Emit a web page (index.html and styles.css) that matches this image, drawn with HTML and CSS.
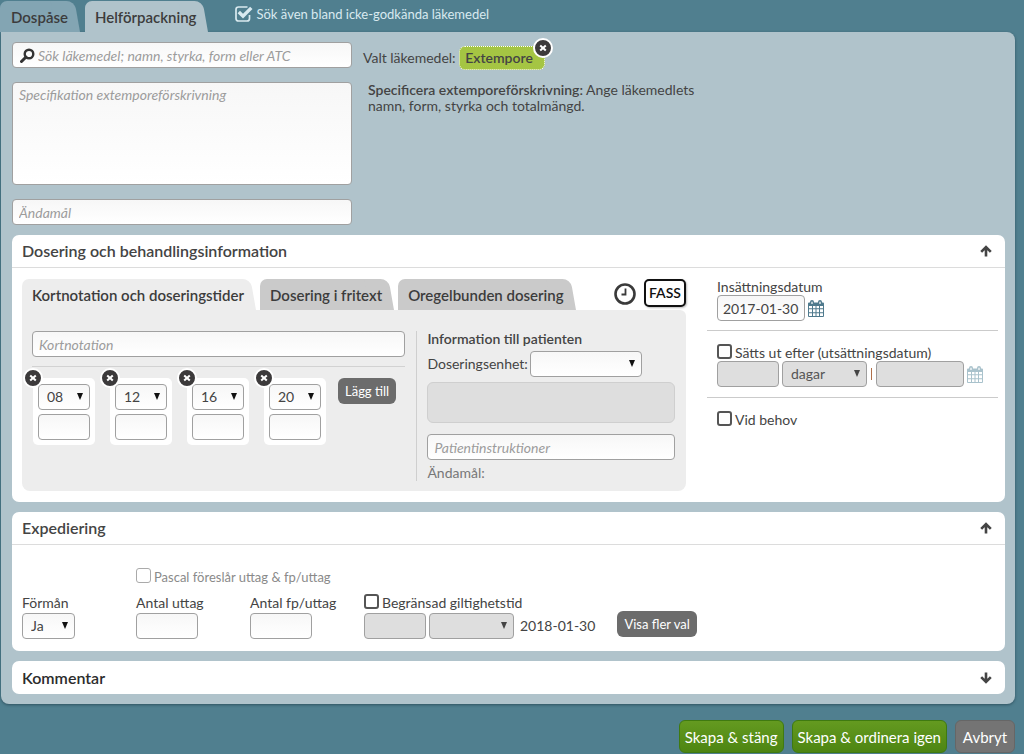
FILE: index.html
```html
<!DOCTYPE html>
<html lang="sv">
<head>
<meta charset="utf-8">
<meta name="viewport" content="width=device-width, initial-scale=1">
<title>Helförpackning</title>
<link rel="stylesheet" href="styles.css">
</head>
<body>
<svg class="defs" aria-hidden="true">
  <symbol id="calendar" viewBox="0 0 16 17">
    <path fill="currentColor" fill-rule="evenodd" d="M0 3.5Q0 2.5 1 2.5H2V2Q2 0 4 0T6 2V2.5H10V2Q10 0 12 0T14 2V2.5H15Q16 2.5 16 3.5V16Q16 17 15 17H1Q0 17 0 16ZM3.400 1.700V4H4.600V1.700ZM11.400 1.700V4H12.600V1.700ZM1 6V8.200H4V6ZM5 6V8.200H7.500V6ZM8.500 6V8.200H11V6ZM12 6V8.200H15V6ZM1 9.200V12.200H4V9.200ZM5 9.200V12.200H7.500V9.200ZM8.500 9.200V12.200H11V9.200ZM12 9.200V12.200H15V9.200ZM1 13.200V16H4V13.200ZM5 13.200V16H7.500V13.200ZM8.500 13.200V16H11V13.200ZM12 13.200V16H15V13.200Z"/>
  </symbol>
  <symbol id="arrow" viewBox="0 0 12 12">
    <path d="M6 11.500V2M1.200 6.800 6 2 10.800 6.800" fill="none" stroke="currentColor" stroke-width="2.600"/>
  </symbol>
  <symbol id="cross" viewBox="0 0 8 8">
    <path d="M1.200 1.400 6.800 6.600M6.800 1.400 1.200 6.600" fill="none" stroke="currentColor" stroke-width="2"/>
  </symbol>
</svg>

<header class="topbar">
  <nav class="tabs">
    <button type="button" class="tab tab-back"><span>Dospåse</span></button>
    <button type="button" class="tab tab-front"><span>Helförpackning</span></button>
  </nav>
  <label class="include">
    <input type="checkbox" class="include-box" checked>
    <svg class="include-icon" viewBox="0 0 18 16" aria-hidden="true"><path d="M14.500 9V12.500Q14.500 15 12 15H3.500Q1 15 1 12.500V3.500Q1 1 3.500 1H12.500" fill="none" stroke="currentColor" stroke-width="1.700"/><path d="M3.800 6 8 10.200 16.300 1.900" fill="none" stroke="currentColor" stroke-width="3.400"/></svg>
    Sök även bland icke-godkända läkemedel
  </label>
</header>

<main class="panel">
  <section class="drug">
    <div class="drug-fields">
      <div class="search">
        <svg class="search-icon" viewBox="0 0 15 15" aria-hidden="true"><circle cx="9" cy="6" r="4.300" fill="none" stroke="currentColor" stroke-width="2.400"/><path d="M6 9 1.500 13.500" stroke="currentColor" stroke-width="3" stroke-linecap="round"/></svg>
        <input type="text" class="field search-input" aria-label="Sök läkemedel" placeholder="Sök läkemedel; namn, styrka, form eller ATC">
      </div>
      <textarea class="field spec" aria-label="Specifikation" placeholder="Specifikation extemporeförskrivning"></textarea>
      <input type="text" class="field" aria-label="Ändamål" placeholder="Ändamål">
    </div>
    <div class="drug-info">
      <p class="chosen">Valt läkemedel: <span class="chip">Extempore<button type="button" class="close chip-close" aria-label="Ta bort Extempore"><svg><use href="#cross"/></svg></button></span></p>
      <p class="help"><b>Specificera extemporeförskrivning:</b> Ange läkemedlets namn, form, styrka och totalmängd.</p>
    </div>
  </section>

  <section class="card">
    <div class="card-head">
      <h2>Dosering och behandlingsinformation</h2>
      <button type="button" class="toggle" aria-label="Fäll ihop"><svg><use href="#arrow"/></svg></button>
    </div>
    <div class="dosing">
      <div class="dosing-main">
        <div class="dosing-top">
          <nav class="tabs tabs-inner">
            <button type="button" class="tab tab-active"><span>Kortnotation och doseringstider</span></button>
            <button type="button" class="tab tab-grey"><span>Dosering i fritext</span></button>
            <button type="button" class="tab tab-grey"><span>Oregelbunden dosering</span></button>
          </nav>
          <div class="tools">
            <button type="button" class="clock" aria-label="Historik"><svg viewBox="0 0 22 22"><circle cx="11" cy="11" r="9.500" fill="none" stroke="currentColor" stroke-width="2.600"/><path d="M11.500 5.500V11.500H7.500" fill="none" stroke="currentColor" stroke-width="1.800"/></svg></button>
            <button type="button" class="fass">FASS</button>
          </div>
        </div>
        <div class="dosing-body">
          <div class="schedule">
            <input type="text" class="field" aria-label="Kortnotation" placeholder="Kortnotation">
            <div class="times">
              <div class="time">
                <button type="button" class="close time-close" aria-label="Ta bort 08"><svg><use href="#cross"/></svg></button>
                <select class="field" aria-label="Tid 1"><option>08</option></select>
                <input type="text" class="field" aria-label="Dos 1">
              </div>
              <div class="time">
                <button type="button" class="close time-close" aria-label="Ta bort 12"><svg><use href="#cross"/></svg></button>
                <select class="field" aria-label="Tid 2"><option>12</option></select>
                <input type="text" class="field" aria-label="Dos 2">
              </div>
              <div class="time">
                <button type="button" class="close time-close" aria-label="Ta bort 16"><svg><use href="#cross"/></svg></button>
                <select class="field" aria-label="Tid 3"><option>16</option></select>
                <input type="text" class="field" aria-label="Dos 3">
              </div>
              <div class="time">
                <button type="button" class="close time-close" aria-label="Ta bort 20"><svg><use href="#cross"/></svg></button>
                <select class="field" aria-label="Tid 4"><option>20</option></select>
                <input type="text" class="field" aria-label="Dos 4">
              </div>
              <button type="button" class="btn add">Lägg till</button>
            </div>
          </div>
          <div class="patient">
            <h3>Information till patienten</h3>
            <div class="unit">
              <label for="unit">Doseringsenhet:</label>
              <select id="unit" class="field unit-select"><option></option></select>
            </div>
            <div class="preview"></div>
            <input type="text" class="field" aria-label="Patientinstruktioner" placeholder="Patientinstruktioner">
            <p class="purpose">Ändamål:</p>
          </div>
        </div>
      </div>
      <div class="dates">
        <div class="date-block">
          <label for="start">Insättningsdatum</label>
          <div class="date-row">
            <input type="text" id="start" class="field date" value="2017-01-30">
            <button type="button" class="calendar" aria-label="Välj datum"><svg><use href="#calendar"/></svg></button>
          </div>
        </div>
        <div class="date-block">
          <label class="check"><input type="checkbox">Sätts ut efter (utsättningsdatum)</label>
          <div class="date-row">
            <input type="text" class="field short" aria-label="Antal" disabled>
            <select class="field period" aria-label="Period" disabled><option>dagar</option></select>
            <span class="bar"></span>
            <input type="text" class="field date" aria-label="Utsättningsdatum" disabled>
            <button type="button" class="calendar" aria-label="Välj utsättningsdatum" disabled><svg><use href="#calendar"/></svg></button>
          </div>
        </div>
        <div class="date-block">
          <label class="check"><input type="checkbox">Vid behov</label>
        </div>
      </div>
    </div>
  </section>

  <section class="card">
    <div class="card-head">
      <h2>Expediering</h2>
      <button type="button" class="toggle" aria-label="Fäll ihop"><svg><use href="#arrow"/></svg></button>
    </div>
    <div class="dispense">
      <label class="check suggest"><input type="checkbox" disabled>Pascal föreslår uttag &amp; fp/uttag</label>
      <div class="cell">
        <label for="benefit">Förmån</label>
        <select id="benefit" class="field benefit"><option>Ja</option></select>
      </div>
      <div class="cell">
        <label for="count">Antal uttag</label>
        <input type="text" id="count" class="field short">
      </div>
      <div class="cell">
        <label for="packs">Antal fp/uttag</label>
        <input type="text" id="packs" class="field short">
      </div>
      <div class="cell">
        <label class="check"><input type="checkbox">Begränsad giltighetstid</label>
        <div class="date-row">
          <input type="text" class="field short" aria-label="Giltighetstid" disabled>
          <select class="field period" aria-label="Enhet" disabled><option></option></select>
          <span class="until">2018-01-30</span>
        </div>
      </div>
      <button type="button" class="btn more">Visa fler val</button>
    </div>
  </section>

  <section class="card">
    <div class="card-head card-head-closed">
      <h2>Kommentar</h2>
      <button type="button" class="toggle toggle-down" aria-label="Fäll ut"><svg><use href="#arrow"/></svg></button>
    </div>
  </section>
</main>

<footer class="actions">
  <button type="button" class="action action-green">Skapa &amp; stäng</button>
  <button type="button" class="action action-green">Skapa &amp; ordinera igen</button>
  <button type="button" class="action action-grey">Avbryt</button>
</footer>
</body>
</html>
```
FILE: styles.css
```css
* { box-sizing: border-box; }

body {
  margin: 0;
  background: #507f8f;
  color: #444;
  font: 14px/16px Lato, "Open Sans", sans-serif;
}

button, input, select, textarea {
  margin: 0;
  font: inherit;
  color: inherit;
}

button {
  padding: 0;
  border: 0;
  background: none;
}

h2, h3, p { margin: 0; }

svg { display: block; }

.defs { position: absolute; width: 0; height: 0; }

/* Tabs */

.topbar {
  display: flex;
  align-items: flex-start;
  gap: 27px;
  padding-top: 1px;
}

.tabs { display: flex; gap: 5px; }

.tab {
  position: relative;
  z-index: 0;
  height: 31px;
  padding: 0 12px 0 10px;
  font-size: 15px;
  font-weight: 600;
  white-space: nowrap;
  color: #3c3c3c;
}

.tab::before,
.tab::after {
  content: "";
  position: absolute;
  z-index: -1;
  top: 0;
  bottom: 0;
  background: var(--tab);
}

.tab::before { left: 0; right: 16px; border-radius: 7px 0 0 0; }

.tab::after {
  right: 0;
  width: 24px;
  border-radius: 0 8px 0 0;
  transform: skewX(10deg);
  transform-origin: bottom;
}

.tab-back { --tab: #83a5b3; padding-left: 11px; }
.tab-front { --tab: #b0c3cb; }
.tab-active { --tab: #ededed; }
.tab-grey { --tab: #cacaca; }

.include {
  display: flex;
  align-items: center;
  gap: 3px;
  padding-top: 5px;
  color: #d9eaf0;
  font-size: 13px;
}

.include-box { position: absolute; opacity: 0; }
.include-icon { width: 18px; height: 16px; }

/* Main panel */

.panel {
  display: flex;
  flex-direction: column;
  gap: 10px;
  margin: 0 9px 0 1px;
  padding: 10px 10px 10px 11px;
  background: #b0c3cb;
  border-radius: 0 8px 8px 8px;
  box-shadow: 0 1px 3px #2f5260;
}

.field {
  display: block;
  width: 100%;
  min-width: 0;
  height: 26px;
  padding: 0 6px;
  border: 1px solid #a0a0a0;
  border-radius: 4px;
  background: linear-gradient(#f7f7f7, #fff);
}

.field::placeholder { color: #9c9c9c; font-style: italic; opacity: 1; }

select.field {
  appearance: none;
  padding: 0 20px 0 8px;
  background:
    url("data:image/svg+xml,%3Csvg xmlns='http://www.w3.org/2000/svg' viewBox='0 0 6 7'%3E%3Cpath d='M0 0H6L3 7Z' fill='%23111'/%3E%3C/svg%3E") right 6px top 8px / 6px 7px no-repeat,
    linear-gradient(#f7f7f7, #fff);
}

.field:disabled {
  background-color: #dedede;
  background-image: none;
  color: #555;
  opacity: 1;
}

select.field:disabled {
  background-image: url("data:image/svg+xml,%3Csvg xmlns='http://www.w3.org/2000/svg' viewBox='0 0 6 7'%3E%3Cpath d='M0 0H6L3 7Z' fill='%23444'/%3E%3C/svg%3E");
}

.drug { display: flex; gap: 11px; }

.drug-fields {
  display: flex;
  flex-direction: column;
  gap: 14px;
  flex: 0 1 340px;
}

.search { position: relative; }

.search-icon {
  position: absolute;
  top: 6px;
  left: 8px;
  width: 15px;
  height: 15px;
  color: #333;
}

.search-input { padding-left: 25px; }

.spec {
  height: 103px;
  padding: 4px 6px;
  resize: none;
}

.drug-info {
  flex: 0 1 340px;
  padding-top: 4px;
}

.chip {
  position: relative;
  display: inline-block;
  padding: 3px 11px 3px 5px;
  border: 1px dotted #fff;
  border-radius: 6px;
  background: #a5c543;
  font-weight: 600;
}

.close {
  display: grid;
  place-items: center;
  width: 20px;
  height: 20px;
  border: 2px solid #fff;
  border-radius: 50%;
  background: #3c3a3b;
  color: #fff;
}

.close svg { width: 8px; height: 8px; }

.chip-close { position: absolute; top: -9px; right: -9px; }

.help { padding: 12px 0 0 5px; }
.help b { font-weight: 600; }

/* Cards */

.card {
  border-radius: 7px;
  background: #fff;
}

.card-head {
  display: flex;
  align-items: center;
  justify-content: space-between;
  min-height: 33px;
  padding: 0 13px 0 10px;
  border-bottom: 1px solid #dcdcdc;
}

.card-head-closed { border-bottom: 0; color: #2c2c2c; }

h2 { font-size: 16px; font-weight: 600; line-height: 20px; }
h3 { font-size: 14px; font-weight: 600; }

.toggle { color: #444; }
.toggle svg { width: 12px; height: 12px; }
.toggle-down { transform: rotate(180deg); }

.dosing {
  display: flex;
  gap: 21px;
  padding: 11px 7px 11px 10px;
}

.dosing-main { flex: 1 1 664px; }

.dosing-top { display: flex; justify-content: space-between; }

.tabs-inner { gap: 4px; }

.tools { display: flex; align-items: flex-start; gap: 8px; }

.clock { padding-top: 4px; color: #3a3a3a; }
.clock svg { width: 22px; height: 22px; }

.fass {
  width: 42px;
  height: 28px;
  border: 2px solid #111;
  border-radius: 5px;
  background: #fff;
  box-shadow: 1px 1px 2px #bbb;
  color: #111;
  font-weight: 600;
}

.dosing-body {
  display: flex;
  gap: 11px;
  padding: 21px 11px 10px 10px;
  border-radius: 0 6px 8px 8px;
  background: #ededed;
}

.schedule { flex: 1 1 374px; }

.times {
  display: flex;
  align-items: flex-start;
  margin-top: 9px;
  padding: 11px 0 0 1px;
  border-top: 1px solid #d2d2d2;
}

.time {
  position: relative;
  display: flex;
  flex-direction: column;
  gap: 4px;
  width: 62px;
  padding: 6px 5px 5px;
  border-radius: 5px;
  background: #fff;
}

.time + .time { margin-left: 15px; }

.time-close { position: absolute; top: -10px; left: -10px; }

.btn {
  height: 26px;
  padding: 0 7px;
  border-radius: 6px;
  background: #6c6c6c;
  color: #fff;
  font-size: 13px;
  white-space: nowrap;
}

.add { margin-left: 12px; }

.patient {
  flex: 0 1 259px;
  padding-left: 10px;
  border-left: 1px solid #cfcfcf;
}

.unit { display: flex; align-items: center; gap: 2px; padding-top: 4px; }
.unit-select { width: 112px; }

.preview {
  height: 41px;
  margin: 5px 0 11px;
  border: 1px solid #cfcfcf;
  border-radius: 6px;
  background: #dedede;
}

.purpose { padding-top: 5px; color: #777; }

/* Date column */

.dates { flex: 0 1 291px; }

.date-block { padding: 13px 0 10px 10px; }
.date-block:first-child { padding-top: 0; padding-bottom: 9px; }
.date-block + .date-block { border-top: 1px solid #cbcbcb; }

.date-row { display: flex; align-items: center; gap: 3px; }

.date { width: 88px; padding: 0 5px; }
.short { width: 62px; }
.period { width: 85px; }

.bar { width: 1px; height: 12px; margin: 0 1px; background: #b0704a; }

.calendar { color: #4f7a8d; }
.calendar:disabled { color: #a9c2cc; }
.calendar svg { width: 16px; height: 17px; }

.check { display: flex; align-items: flex-end; gap: 3px; height: 17px; }

.check input {
  appearance: none;
  width: 15px;
  height: 15px;
  margin-bottom: 2px;
  border: 2px solid #555;
  border-radius: 3px;
  background: #fff;
}

.check input:checked { background: #555; }
.check input:disabled { border: 1px solid #aaa; }

/* Dispensing row */

.dispense {
  display: grid;
  grid-template-columns: 114px 114px 114px auto auto 1fr;
  align-items: end;
  row-gap: 9px;
  padding: 23px 10px 12px;
}

.suggest { grid-column: 2 / -1; color: #8a8a8a; font-size: 13px; }

.dispense .cell { grid-row: 2; display: grid; gap: 2px; }
.benefit { width: 53px; }
.until { padding-left: 3px; }
.more { grid-row: 2; margin-left: 22px; margin-bottom: 2px; }

/* Footer */

.actions {
  display: flex;
  justify-content: flex-end;
  gap: 8px;
  padding: 16px 9px 1px;
}

.action {
  min-width: 60px;
  height: 33px;
  padding: 0 5px;
  border: 1px solid #3f7a10;
  border-radius: 6px;
  color: #fff;
  font-size: 15px;
}

.action-green { background: linear-gradient(#649a20, #4d8512); }
.action-grey { border-color: #666; background: #747474; }
```
